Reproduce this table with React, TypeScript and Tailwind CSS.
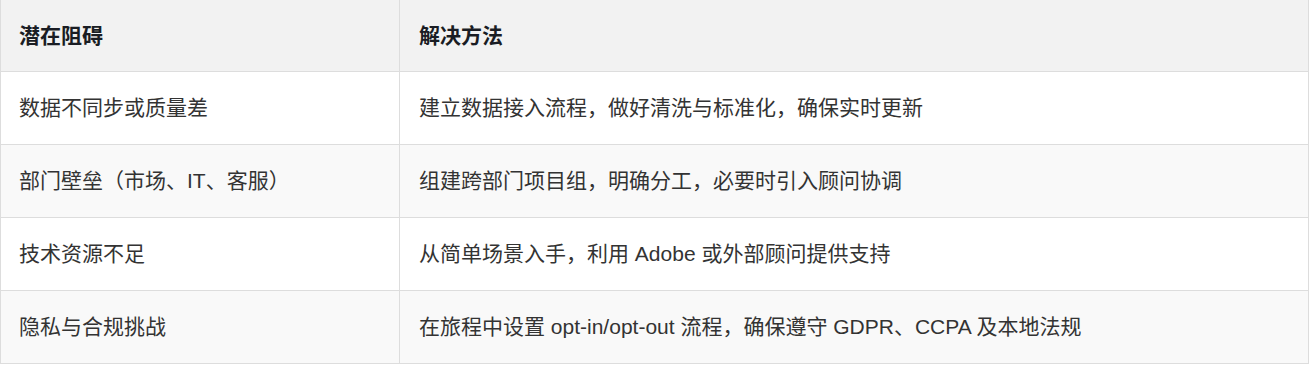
import React from "react";

const rows = [
  ["数据不同步或质量差", "建立数据接入流程，做好清洗与标准化，确保实时更新"],
  ["部门壁垒（市场、IT、客服）", "组建跨部门项目组，明确分工，必要时引入顾问协调"],
  ["技术资源不足", "从简单场景入手，利用 Adobe 或外部顾问提供支持"],
  ["隐私与合规挑战", "在旅程中设置 opt-in/opt-out 流程，确保遵守 GDPR、CCPA 及本地法规"],
];

export default function App() {
  return (
    <div
      className="w-[1309px] bg-white text-[21px] text-[#333]"
      style={{ fontFamily: '"Liberation Sans", "Noto Sans CJK SC", sans-serif' }}
    >
      <div className="grid grid-cols-[399px_1fr] border-x border-[#ddd]">
        <div className="h-[72px] flex items-center pl-[18px] bg-[#f2f2f2] border-b border-r border-[#ddd] font-bold text-[#1a1d24]">
          潜在阻碍
        </div>
        <div className="h-[72px] flex items-center pl-[19px] bg-[#f2f2f2] border-b border-[#ddd] font-bold text-[#1a1d24]">
          解决方法
        </div>
        {rows.map(([a, b], i) => {
          const bg = i % 2 === 1 ? "bg-[#f9f9f9]" : "bg-white";
          return (
            <React.Fragment key={i}>
              <div className={`h-[73px] flex items-center pl-[18px] border-b border-r border-[#ddd] ${bg}`}>{a}</div>
              <div className={`h-[73px] flex items-center pl-[19px] border-b border-[#ddd] ${bg}`}>{b}</div>
            </React.Fragment>
          );
        })}
      </div>
    </div>
  );
}
